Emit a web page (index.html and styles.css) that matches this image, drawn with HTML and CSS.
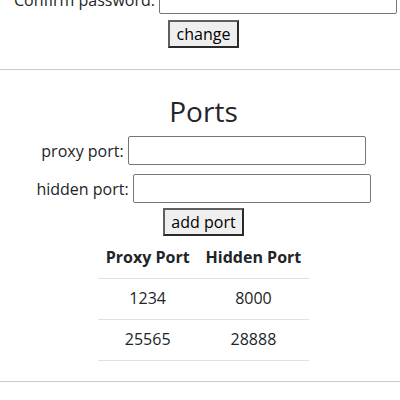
FILE: index.html
```html
<!DOCTYPE html>
<html>
<head>
<meta charset="utf-8">
<link rel="stylesheet" href="styles.css">
</head>
<body>
<section class="block pw">
  <div class="row row-confirm"><label>Confirm password:</label><input type="password" class="field"></div>
  <button class="btn btn-change">change</button>
</section>
<hr class="rule">
<section class="block ports">
  <h2 class="title">Ports</h2>
  <div class="row"><label>proxy port:</label><input type="text" class="field"></div>
  <div class="row row-second"><label>hidden port:</label><input type="text" class="field"></div>
  <button class="btn btn-add">add port</button>
  <table class="ptable">
    <thead>
      <tr><th>Proxy Port</th><th>Hidden Port</th></tr>
    </thead>
    <tbody>
      <tr><td>1234</td><td>8000</td></tr>
      <tr><td>25565</td><td>28888</td></tr>
    </tbody>
  </table>
</section>
<hr class="rule rule-bottom">
</body>
</html>
```
FILE: styles.css
```css
html, body {
  margin: 0;
  padding: 0;
  background: #fff;
}
body {
  font-family: "Open Sans", "DejaVu Sans", sans-serif;
  font-size: 16px;
  line-height: 22px;
  color: #212529;
}
.block {
  display: flex;
  flex-direction: column;
  align-items: center;
  padding-left: 7px;
}
.pw {
  margin-top: -15px;
}
.row {
  display: flex;
  align-items: center;
  gap: 4px;
}
.row-confirm {
  margin-left: 4px;
}
.row-second {
  margin-top: 9px;
}
.field {
  box-sizing: border-box;
  width: 238px;
  height: 29px;
  border: 1px solid #767676;
  border-radius: 2px;
  padding: 0 3px;
  font: inherit;
  margin: 0;
  background: #fff;
}
.btn {
  box-sizing: border-box;
  height: 28px;
  margin: 0;
  padding: 0 6px;
  font: inherit;
  color: #000;
  background: #efefef;
  border-width: 2px;
  border-style: solid;
  border-color: #5f5f5f #2a2a2a #2a2a2a #5f5f5f;
}
.btn-change {
  margin-top: 6px;
  padding: 0 7px;
}
.btn-add {
  margin-top: 5px;
}
.rule {
  margin: 21px 0 0 0;
  border: 0;
  border-top: 1px solid #c8c8c8;
  height: 0;
}
.rule-bottom {
  margin-top: 20px;
}
.title {
  margin: 22px 0 6px 0;
  font-size: 28px;
  line-height: 38px;
  font-weight: 400;
}
.ptable {
  margin-top: 2px;
  border-collapse: collapse;
}
.ptable th, .ptable td {
  padding: 8px 8px 9px 8px;
  line-height: 23px;
  text-align: center;
  border-bottom: 1px solid #dee2e6;
}
.ptable th {
  font-weight: 700;
}
```
